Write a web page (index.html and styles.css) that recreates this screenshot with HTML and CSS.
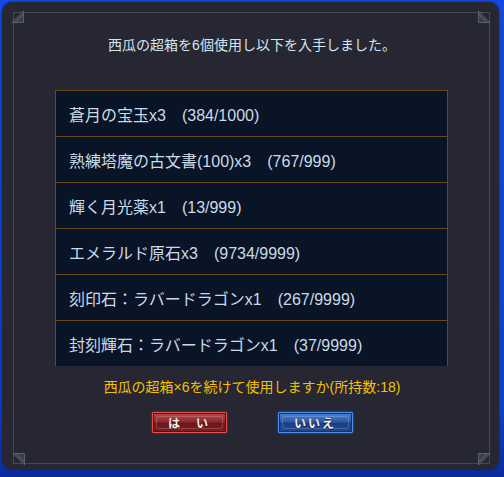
FILE: index.html
```html
<!DOCTYPE html>
<html lang="ja">
<head>
<meta charset="utf-8">
<link rel="stylesheet" href="styles.css">
</head>
<body>
<div class="dialog">
  <div class="frame">
    <svg class="orn orn-tl" width="14" height="14" viewBox="0 0 14 14"><path d="M1 12.5 L12.5 1 L12.5 12.5 Z" fill="#3a3c4a" stroke="#5c5e6c" stroke-width="1"/><path d="M4 12.5 L12.5 4" stroke="#6a6c7a" stroke-width="1"/></svg>
    <svg class="orn orn-tr" width="14" height="14" viewBox="0 0 14 14"><path d="M1.5 1 L13 12.5 L1.5 12.5 Z" fill="#3a3c4a" stroke="#5c5e6c" stroke-width="1"/><path d="M1.5 4 L10 12.5" stroke="#6a6c7a" stroke-width="1"/></svg>
    <svg class="orn orn-bl" width="14" height="14" viewBox="0 0 14 14"><path d="M1 1.5 L12.5 13 L12.5 1.5 Z" fill="#3a3c4a" stroke="#5c5e6c" stroke-width="1"/><path d="M4 1.5 L12.5 10" stroke="#6a6c7a" stroke-width="1"/></svg>
    <svg class="orn orn-br" width="14" height="14" viewBox="0 0 14 14"><path d="M13 1.5 L1.5 13 L1.5 1.5 Z" fill="#3a3c4a" stroke="#5c5e6c" stroke-width="1"/><path d="M10 1.5 L1.5 10" stroke="#6a6c7a" stroke-width="1"/></svg>

    <p class="title">西瓜の超箱を6個使用し以下を入手しました。</p>
    <div class="list">
      <div class="row">蒼月の宝玉x3　(384/1000)</div>
      <div class="row">熟練塔魔の古文書(100)x3　(767/999)</div>
      <div class="row">輝く月光薬x1　(13/999)</div>
      <div class="row">エメラルド原石x3　(9734/9999)</div>
      <div class="row">刻印石：ラバードラゴンx1　(267/9999)</div>
      <div class="row">封刻輝石：ラバードラゴンx1　(37/9999)</div>
    </div>
    <p class="question">西瓜の超箱×6を続けて使用しますか(所持数:18)</p>
    <div class="buttons">
      <button class="btn btn-yes">は　い</button>
      <button class="btn btn-no">いいえ</button>
    </div>
  </div>
</div>
</body>
</html>
```
FILE: styles.css
```css
html, body {
  margin: 0;
  padding: 0;
}
body {
  width: 504px;
  height: 477px;
  overflow: hidden;
  background: linear-gradient(180deg, #1448e0 0%, #0f3fd0 85%, #0a2c9a 100%);
  font-family: "Liberation Sans", "Noto Sans CJK JP", sans-serif;
}
.dialog {
  margin: 2px 5px 0 2px;
  width: 497px;
  height: 468px;
  box-sizing: border-box;
  background: #262733;
  border-radius: 10px;
  padding: 10px 9px 6px 11px;
  box-shadow: 0 0 2px #0a1c6a;
}
.frame {
  position: relative;
  height: 100%;
  box-sizing: border-box;
  border: 1px solid #464856;
  display: flex;
  flex-direction: column;
  align-items: center;
}
.orn {
  position: absolute;
}
.orn-tl { left: -3px; top: -3px; }
.orn-tr { right: -2px; top: -3px; }
.orn-bl { left: -2px; bottom: -3px; }
.orn-br { right: -2px; bottom: -3px; }

.title {
  margin: 22px 0 0 1px;
  font-size: 14px;
  line-height: 20px;
  color: #d6e4ee;
}
.list {
  margin-top: 35px;
  width: 393px;
  box-sizing: border-box;
  border-left: 1px solid #6a4a12;
  border-right: 1px solid #6a4a12;
  background: #091426;
}
.row {
  height: 45px;
  border-top: 1px solid #6a4a12;
  padding-left: 13px;
  display: flex;
  align-items: center;
  font-size: 16px;
  color: #c9dbe8;
  white-space: nowrap;
}
.question {
  margin: 11px 0 0 1px;
  font-size: 14px;
  line-height: 20px;
  color: #f2c200;
}
.buttons {
  margin-top: 15px;
  display: flex;
  gap: 51px;
  margin-left: 1px;
}
.btn {
  position: relative;
  width: 75px;
  height: 21px;
  padding: 0;
  box-sizing: border-box;
  font-family: "Noto Sans CJK JP", sans-serif;
  font-size: 12px;
  font-weight: bold;
  letter-spacing: 2px;
  color: #f4f0f0;
  text-shadow: 0 1px 1px rgba(0,0,0,0.7);
  line-height: 17px;
  border-radius: 1px;
}
.btn-yes {
  background: linear-gradient(180deg, #b84a4e 0%, #8e2a2e 45%, #6e1618 55%, #7a2024 100%);
  border: 1px solid #e05050;
  box-shadow: 0 0 2px #c03030, inset 0 0 0 1px #5a1012;
}
.btn-no {
  background: linear-gradient(180deg, #4f82d0 0%, #2e5aa6 45%, #1c3f84 55%, #24488e 100%);
  border: 1px solid #4a90f0;
  box-shadow: 0 0 2px #2a6ae0, inset 0 0 0 1px #163070;
}
.btn::after {
  content: "";
  position: absolute;
  left: 3px;
  top: 3px;
  right: 3px;
  bottom: 3px;
  border: 1px solid rgba(255,255,255,0.18);
  border-radius: 3px;
  pointer-events: none;
}
```
